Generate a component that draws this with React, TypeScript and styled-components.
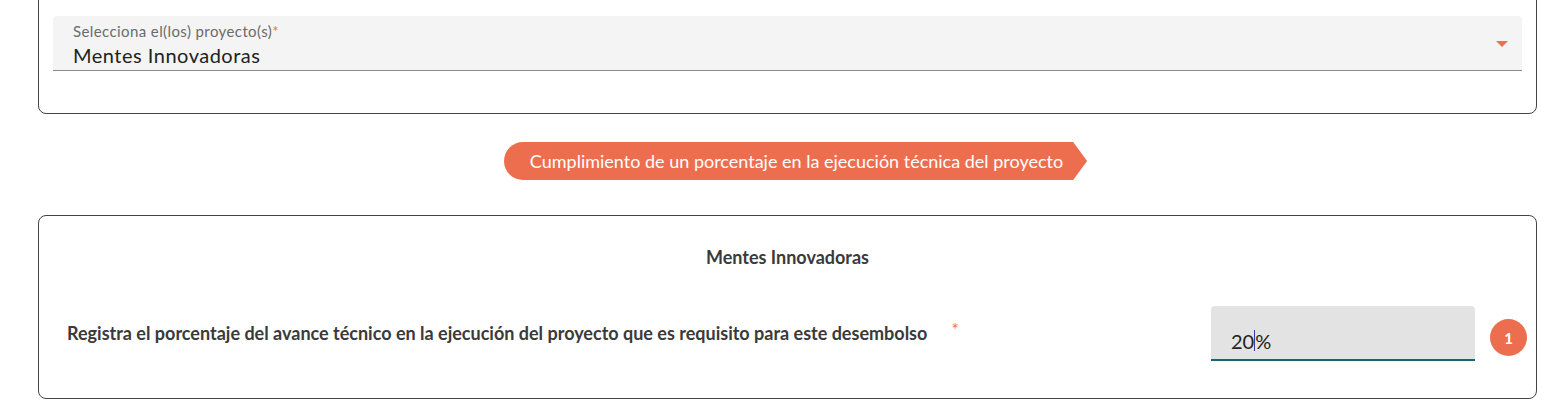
import React from "react";
import styled, { createGlobalStyle } from "styled-components";

const Global = createGlobalStyle`
  html, body { margin: 0; padding: 0; background: #fff; }
  body { font-family: Lato, "Open Sans", sans-serif; overflow: hidden; }
  * { box-sizing: border-box; }
`;

const Page = styled.div`
  width: 1566px;
  height: 416px;
  padding: 0 29px 0 38px;
  display: flex;
  flex-direction: column;
`;

const Card = styled.div<{ $top?: boolean }>`
  border: 1px solid #444;
  border-radius: 8px;
  background: #fff;
  ${(p) => (p.$top ? "margin-top: -20px; padding: 35px 14px 42px 14px;" : "")}
`;

const SelectField = styled.div`
  position: relative;
  height: 55px;
  background: #f4f4f4;
  border-radius: 4px 4px 0 0;
  border-bottom: 1px solid #8a8a8a;
  padding: 5px 20px 0 20px;
  display: flex;
  flex-direction: column;
`;

const SelectLabel = styled.div`
  font-size: 15px;
  letter-spacing: 0.4px;
  color: #6b6b6b;
  line-height: 20px;
  span { color: #ee6f4f; }
`;

const SelectValue = styled.div`
  font-size: 20px;
  letter-spacing: 0.5px;
  color: #222;
  line-height: 25px;
  margin-top: 2px;
`;

const Caret = styled.div`
  position: absolute;
  right: 14px;
  top: 25px;
  width: 0;
  height: 0;
  border-left: 6px solid transparent;
  border-right: 6px solid transparent;
  border-top: 6px solid #ee6f4f;
`;

const BannerRow = styled.div`
  display: flex;
  justify-content: center;
  margin: 28px 0 35px 0;
  padding-left: 16px;
`;

const Banner = styled.div`
  height: 38px;
  background: #ed6e4f;
  color: #fff;
  font-size: 18px;
  display: flex;
  align-items: center;
  padding: 0 24px 0 26px;
  border-radius: 19px 0 0 19px;
  clip-path: polygon(0 0, calc(100% - 14px) 0, 100% 50%, calc(100% - 14px) 100%, 0 100%);
`;

const ProjectCard = styled(Card)`
  height: 184px;
  padding: 30px 9px 0 28px;
  display: flex;
  flex-direction: column;
`;

const ProjectTitle = styled.div`
  text-align: center;
  font-size: 18px;
  font-weight: 700;
  color: #3a3a3a;
  line-height: 22px;
  margin-right: 19px;
`;

const FieldRow = styled.div`
  display: flex;
  align-items: center;
  margin-top: 38px;
`;

const FieldLabel = styled.div`
  flex: 1;
  font-size: 18px;
  font-weight: 700;
  color: #3a3a3a;
  padding-bottom: 2px;
  span {
    color: #ee6f4f;
    font-weight: 400;
    font-size: 17px;
    margin-left: 24px;
    position: relative;
    top: -4px;
  }
`;

const InputBox = styled.div`
  width: 264px;
  height: 55px;
  background: #e3e3e3;
  border-radius: 4px 4px 0 0;
  border-bottom: 2px solid #15686b;
  padding: 16px 20px 0 20px;
  font-size: 20px;
  color: #222;
  display: flex;
  align-items: center;
`;

const Cursor = styled.span`
  display: inline-block;
  width: 1px;
  height: 21px;
  background: #3140a0;
`;

const Badge = styled.div`
  width: 37px;
  height: 37px;
  border-radius: 50%;
  background: #ed6e4f;
  color: #fff;
  font-weight: 700;
  font-size: 15px;
  display: flex;
  align-items: center;
  justify-content: center;
  margin-left: 15px;
  margin-top: 8px;
`;

export default function App() {
  return (
    <>
      <Global />
      <Page>
        <Card $top>
          <SelectField>
            <SelectLabel>
              Selecciona el(los) proyecto(s)<span>*</span>
            </SelectLabel>
            <SelectValue>Mentes Innovadoras</SelectValue>
            <Caret />
          </SelectField>
        </Card>
        <BannerRow>
          <Banner>Cumplimiento de un porcentaje en la ejecución técnica del proyecto</Banner>
        </BannerRow>
        <ProjectCard>
          <ProjectTitle>Mentes Innovadoras</ProjectTitle>
          <FieldRow>
            <FieldLabel>
              Registra el porcentaje del avance técnico en la ejecución del proyecto que es requisito para este desembolso
              <span>*</span>
            </FieldLabel>
            <InputBox>
              20<Cursor />%
            </InputBox>
            <Badge>1</Badge>
          </FieldRow>
        </ProjectCard>
      </Page>
    </>
  );
}
